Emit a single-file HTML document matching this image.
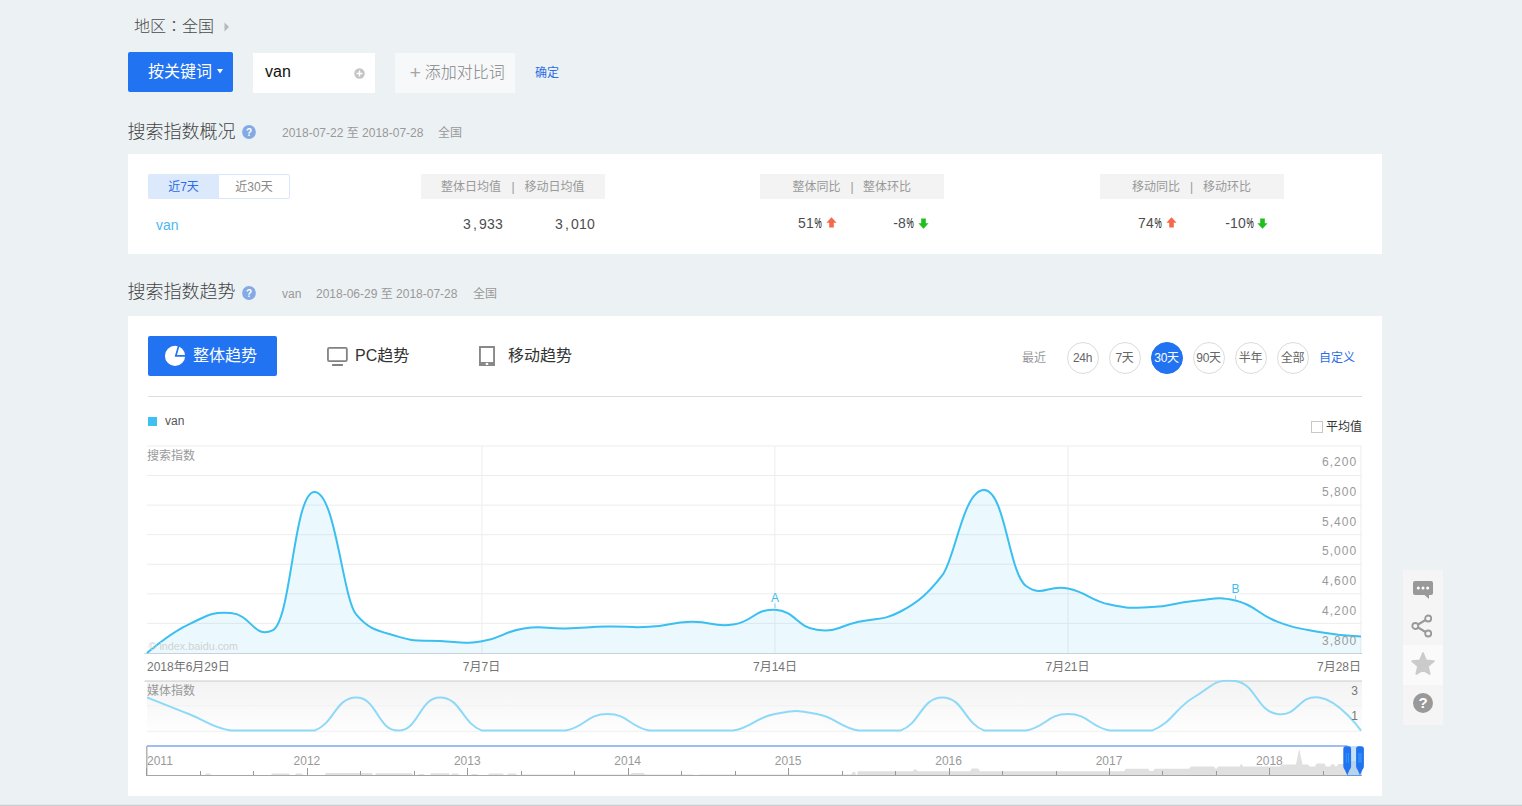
<!DOCTYPE html>
<html lang="zh-CN"><head><meta charset="utf-8"><title>百度指数</title><style>
*{margin:0;padding:0;box-sizing:border-box}
html,body{width:1522px;height:806px;overflow:hidden}
body{background:#ecf1f4;font-family:"Liberation Sans","Noto Sans CJK SC",sans-serif;color:#333;position:relative;font-size:12px}
.abs{position:absolute;white-space:nowrap}
.t16{font-size:16px;line-height:20px}
.lt{font-weight:300}
.jp{font-family:"Noto Sans CJK JP","Noto Sans CJK TC",sans-serif}
.t12{font-size:12px;line-height:16px}
.panel{position:absolute;left:128px;width:1254px;background:#fff}
.blue{background:#2173f1;color:#fff;border-radius:2px}
.hd{position:absolute;top:174px;height:25px;width:184px;background:#f3f3f3;color:#999;font-size:12px;line-height:27px}
.hd span{position:absolute;top:0}
.num{font-size:14px;color:#4e4e4e;line-height:16px}
.num i{display:inline-block;width:8px;text-align:center;font-style:normal}
.num i.n{width:5px}
.num i.p b{display:inline-block;font-weight:normal;transform:scaleX(0.58);transform-origin:50% 50%;margin:0 -3px;color:#000}
.circ{position:absolute;top:342px;width:32px;height:32px;border-radius:16px;border:1px solid #dcdcdc;background:#fff;color:#666;font-size:12px;line-height:30px;text-align:center;letter-spacing:-0.3px;text-indent:-1px}
.circ.on{background:#2173f1;border-color:#2173f1;color:#fff}
svg.chart{position:absolute;left:0;top:0}
svg text{font-family:"Liberation Sans","Noto Sans CJK SC",sans-serif}
.yl{font-size:12px;fill:#999;letter-spacing:1px}
.cl{font-size:12px;fill:#999}
.wm{font-size:10.8px;fill:#d2d2d2}
.mk{font-size:12px;fill:#3bbdee}
.xl{font-size:12px;fill:#747474}
.xl2{font-size:12px;fill:#777}
.yr{font-size:12px;fill:#999}
.tb{position:absolute;left:1403px;width:40px;background:#f5f5f5}
</style></head>
<body>
<div class="abs t16 lt" style="left:134px;top:17px;color:#4a4a4a">地区<span lang="ja" class="jp" style="display:inline-block;width:16px;height:10px;line-height:10px;overflow:visible;vertical-align:baseline">：</span>全国</div>
<svg class="abs" style="left:223.7px;top:21.8px" width="6" height="10" viewBox="0 0 6 10"><path d="M0.5,0.5 L5,5 L0.5,9.5 Z" fill="#b5b9bd"/></svg>
<div class="abs blue" style="left:128px;top:52px;width:105px;height:40px"></div>
<div class="abs t16" style="left:148px;top:62px;color:#fff">按关键词</div>
<svg class="abs" style="left:217px;top:69px" width="6" height="5" viewBox="0 0 6 5"><path d="M0,0 H6 L3,4.5 Z" fill="#fff"/></svg>
<div class="abs" style="left:253px;top:53px;width:122px;height:40px;background:#fff"></div>
<div class="abs t16" style="left:265px;top:62px;color:#111">van</div>
<svg class="abs" style="left:354px;top:68px" width="11" height="11" viewBox="0 0 11 11"><circle cx="5.5" cy="5.5" r="5.2" fill="#c4c4c4"/><path d="M2.5,5.5 H8.5 M5.5,2.5 V8.5" stroke="#fff" stroke-width="1.4"/></svg>
<div class="abs" style="left:395px;top:53px;width:120px;height:40px;background:#f6f8fa"></div>
<div class="abs t16 lt" style="left:410.2px;top:62px;color:#858585"><span style="font-size:19px;color:#a5a5a5;position:relative;top:0.5px;left:-0.5px">+</span><span style="margin-left:3.5px">添加对比词</span></div>
<div class="abs t12" style="left:535px;top:65px;color:#2b6de6">确定</div>
<div class="abs" style="left:127.5px;top:120px;font-size:18px;line-height:24px;color:#444;font-weight:300">搜索指数概况</div>
<svg class="abs" style="left:241.8px;top:124.5px" width="14" height="14" viewBox="0 0 14 14"><circle cx="7" cy="7" r="6.9" fill="#84aae6"/><text x="7" y="10.6" text-anchor="middle" font-size="10" font-weight="bold" fill="#fff">?</text></svg>
<div class="abs t12" style="left:282px;top:125px;color:#999">2018-07-22 至 2018-07-28</div>
<div class="abs t12" style="left:438px;top:125px;color:#999">全国</div>
<div class="panel" style="top:154px;height:100px"></div>
<div class="abs" style="left:148px;top:174px;width:142px;height:25px;border:1px solid #dbe6fb;border-radius:2px;background:#fff"></div>
<div class="abs" style="left:148px;top:174px;width:71px;height:25px;background:#dce8fc;border-radius:2px 0 0 2px;color:#2b6de6;text-align:center;line-height:27px;font-size:12px">近7天</div>
<div class="abs" style="left:219px;top:174px;width:70px;height:25px;color:#888;text-align:center;line-height:27px;font-size:12px">近30天</div>
<div class="hd" style="left:421px"><span style="left:20px">整体日均值</span><span style="left:90.5px">|</span><span style="left:103.5px">移动日均值</span></div>
<div class="hd" style="left:760px"><span style="left:32.5px">整体同比</span><span style="left:90.5px">|</span><span style="left:103px">整体环比</span></div>
<div class="hd" style="left:1100px"><span style="left:32px">移动同比</span><span style="left:90px">|</span><span style="left:103px">移动环比</span></div>
<div class="abs" style="left:156px;top:216px;font-size:14px;line-height:18px;color:#4bb9ee">van</div>
<div class="abs num" style="left:463px;top:215.5px"><i>3</i><i>,</i><i>9</i><i>3</i><i>3</i></div>
<div class="abs num" style="left:555px;top:215.5px"><i>3</i><i>,</i><i>0</i><i>1</i><i>0</i></div>
<div class="abs num" style="left:798px;top:215px"><i>5</i><i>1</i><i class="p"><b>%</b></i></div>
<svg class="abs" style="left:826.3px;top:216.9px" width="11" height="11" viewBox="0 0 11 11"><path d="M5.5,0.3 L10.6,5.8 H7.8 V10.5 H3.2 V5.8 H0.4 Z" fill="#f4694c"/></svg>
<div class="abs num" style="left:893px;top:215px"><i class="n">-</i><i>8</i><i class="p"><b>%</b></i></div>
<svg class="abs" style="left:918.3px;top:218px" width="11" height="11" viewBox="0 0 11 11"><path d="M5.5,10.7 L10.6,5.2 H7.8 V0.5 H3.2 V5.2 H0.4 Z" fill="#1fbf1f"/></svg>
<div class="abs num" style="left:1138px;top:215px"><i>7</i><i>4</i><i class="p"><b>%</b></i></div>
<svg class="abs" style="left:1166.3px;top:216.9px" width="11" height="11" viewBox="0 0 11 11"><path d="M5.5,0.3 L10.6,5.8 H7.8 V10.5 H3.2 V5.8 H0.4 Z" fill="#f4694c"/></svg>
<div class="abs num" style="left:1225px;top:215px"><i class="n">-</i><i>1</i><i>0</i><i class="p"><b>%</b></i></div>
<svg class="abs" style="left:1257.3px;top:218px" width="11" height="11" viewBox="0 0 11 11"><path d="M5.5,10.7 L10.6,5.2 H7.8 V0.5 H3.2 V5.2 H0.4 Z" fill="#1fbf1f"/></svg>
<div class="abs" style="left:127.5px;top:280px;font-size:18px;line-height:24px;color:#444;font-weight:300">搜索指数趋势</div>
<svg class="abs" style="left:241.8px;top:286px" width="14" height="14" viewBox="0 0 14 14"><circle cx="7" cy="7" r="6.9" fill="#84aae6"/><text x="7" y="10.6" text-anchor="middle" font-size="10" font-weight="bold" fill="#fff">?</text></svg>
<div class="abs t12" style="left:282px;top:286px;color:#999">van</div>
<div class="abs t12" style="left:316px;top:286px;color:#999">2018-06-29 至 2018-07-28</div>
<div class="abs t12" style="left:473px;top:286px;color:#999">全国</div>
<div class="panel" style="top:316px;height:480px"></div>
<div class="abs blue" style="left:148px;top:336px;width:129px;height:40px"></div>
<svg class="abs" style="left:164px;top:345px" width="22" height="22" viewBox="0 0 22 22"><circle cx="11.04" cy="10.9" r="10.1" fill="#fff"/><path d="M14.9,0.1 L11.8,10.95 H23" fill="none" stroke="#2173f1" stroke-width="1.7" stroke-linejoin="miter"/></svg>
<div class="abs t16" style="left:193px;top:346px;color:#fff">整体趋势</div>
<svg class="abs" style="left:326px;top:346px" width="24" height="22" viewBox="0 0 24 22"><rect x="1.95" y="1.95" width="18.9" height="13.1" rx="1.4" fill="none" stroke="#828282" stroke-width="1.8"/><rect x="6.1" y="18" width="10.8" height="2" fill="#828282"/></svg>
<div class="abs t16" style="left:355px;top:346px;color:#333">PC趋势</div>
<svg class="abs" style="left:478px;top:345px" width="18" height="22" viewBox="0 0 18 22"><path d="M1.5,1 H16.5 a0.5,0.5 0 0 1 0.5,0.5 V20.5 a0.5,0.5 0 0 1 -0.5,0.5 H1.5 a0.5,0.5 0 0 1 -0.5,-0.5 V1.5 a0.5,0.5 0 0 1 0.5,-0.5 Z M2.9,2.9 V17 H15.1 V2.9 Z" fill="#888" fill-rule="evenodd"/><ellipse cx="9" cy="18.9" rx="1.4" ry="1.2" fill="#fff"/></svg>
<div class="abs t16" style="left:508px;top:346px;color:#333">移动趋势</div>
<div class="abs t12" style="left:1022px;top:350px;color:#999">最近</div>
<div class="circ" style="left:1067px">24h</div>
<div class="circ" style="left:1109px">7天</div>
<div class="circ on" style="left:1151px">30天</div>
<div class="circ" style="left:1193px">90天</div>
<div class="circ" style="left:1235px">半年</div>
<div class="circ" style="left:1277px">全部</div>
<div class="abs t12" style="left:1319px;top:350px;color:#2b6de6">自定义</div>
<div class="abs" style="left:148px;top:396px;width:1214px;height:1px;background:#dddddd"></div>
<div class="abs" style="left:147.5px;top:416.6px;width:9px;height:9px;background:#3cc1f1"></div>
<div class="abs t12" style="left:165px;top:413px;color:#555">van</div>
<div class="abs" style="left:1311px;top:421px;width:12px;height:12px;border:1px solid #c8c8c8;background:#fff"></div>
<div class="abs t12" style="left:1326px;top:418.500px;color:#333">平均值</div>
<svg class="chart" width="1522" height="806" viewBox="0 0 1522 806">
<defs><linearGradient id="mg" x1="0" y1="0" x2="0" y2="1"><stop offset="0" stop-color="#f3f3f3"/><stop offset="1" stop-color="#fefefe"/></linearGradient><clipPath id="mc"><rect x="147" y="679.8" width="1215" height="60"/></clipPath></defs>
<line x1="147" y1="446.00" x2="1361.5" y2="446.00" stroke="#ededed" stroke-width="1"/>
<line x1="147" y1="475.56" x2="1361.5" y2="475.56" stroke="#ededed" stroke-width="1"/>
<line x1="147" y1="505.12" x2="1361.5" y2="505.12" stroke="#ededed" stroke-width="1"/>
<line x1="147" y1="534.68" x2="1361.5" y2="534.68" stroke="#ededed" stroke-width="1"/>
<line x1="147" y1="564.24" x2="1361.5" y2="564.24" stroke="#ededed" stroke-width="1"/>
<line x1="147" y1="593.80" x2="1361.5" y2="593.80" stroke="#ededed" stroke-width="1"/>
<line x1="147" y1="623.36" x2="1361.5" y2="623.36" stroke="#ededed" stroke-width="1"/>
<line x1="481.9" y1="446" x2="481.9" y2="653" stroke="#ededed" stroke-width="1"/>
<line x1="774.9" y1="446" x2="774.9" y2="653" stroke="#ededed" stroke-width="1"/>
<line x1="1068.0" y1="446" x2="1068.0" y2="653" stroke="#ededed" stroke-width="1"/>
<line x1="1361.0" y1="446" x2="1361.0" y2="653" stroke="#ededed" stroke-width="1"/>
<path d="M147.00,653.00 C147.00,653.00 169.85,633.05 188.86,624.30 C207.88,615.55 209.84,611.76 230.72,613.10 C251.61,614.44 253.68,639.28 272.59,630.30 C291.49,621.32 293.52,492.26 314.45,491.90 C335.38,491.54 342.69,598.81 356.31,614.70 C369.93,630.59 378.14,630.55 398.17,636.60 C418.21,642.65 419.13,639.85 440.03,641.00 C460.93,642.15 461.19,644.24 481.90,641.20 C502.60,638.16 503.06,631.49 523.76,628.40 C544.46,625.31 544.70,628.87 565.62,628.40 C586.55,627.93 586.56,626.90 607.48,626.50 C628.41,626.10 628.45,627.97 649.34,626.80 C670.24,625.63 670.28,622.35 691.21,621.80 C712.13,621.25 712.33,627.45 733.07,624.60 C753.81,621.75 754.03,608.69 774.93,609.80 C795.83,610.91 796.03,627.12 816.79,629.80 C837.55,632.48 838.21,626.27 858.66,621.80 C879.10,617.33 881.93,621.12 900.52,611.50 C919.10,601.88 929.60,591.78 942.38,575.20 C955.16,558.62 963.32,489.52 984.24,490.00 C1005.17,490.48 1008.94,574.02 1026.10,586.00 C1043.26,597.98 1047.51,584.07 1067.97,588.50 C1088.42,592.93 1089.37,600.17 1109.83,604.60 C1130.28,609.03 1130.78,607.97 1151.69,607.10 C1172.60,606.23 1172.68,602.74 1193.55,601.10 C1214.42,599.46 1215.02,595.80 1235.41,600.50 C1255.81,605.20 1257.64,614.34 1277.28,621.60 C1296.91,628.86 1298.53,628.22 1319.14,631.90 C1339.74,635.58 1361.00,636.60 1361.00,636.60 L1361.00,653 L147.00,653 Z" fill="#38c0f0" fill-opacity="0.098" stroke="none"/>
<rect x="144.5" y="653" width="1217.5" height="1" fill="#c9d1d9"/>
<path d="M147.00,653.00 C147.00,653.00 169.85,633.05 188.86,624.30 C207.88,615.55 209.84,611.76 230.72,613.10 C251.61,614.44 253.68,639.28 272.59,630.30 C291.49,621.32 293.52,492.26 314.45,491.90 C335.38,491.54 342.69,598.81 356.31,614.70 C369.93,630.59 378.14,630.55 398.17,636.60 C418.21,642.65 419.13,639.85 440.03,641.00 C460.93,642.15 461.19,644.24 481.90,641.20 C502.60,638.16 503.06,631.49 523.76,628.40 C544.46,625.31 544.70,628.87 565.62,628.40 C586.55,627.93 586.56,626.90 607.48,626.50 C628.41,626.10 628.45,627.97 649.34,626.80 C670.24,625.63 670.28,622.35 691.21,621.80 C712.13,621.25 712.33,627.45 733.07,624.60 C753.81,621.75 754.03,608.69 774.93,609.80 C795.83,610.91 796.03,627.12 816.79,629.80 C837.55,632.48 838.21,626.27 858.66,621.80 C879.10,617.33 881.93,621.12 900.52,611.50 C919.10,601.88 929.60,591.78 942.38,575.20 C955.16,558.62 963.32,489.52 984.24,490.00 C1005.17,490.48 1008.94,574.02 1026.10,586.00 C1043.26,597.98 1047.51,584.07 1067.97,588.50 C1088.42,592.93 1089.37,600.17 1109.83,604.60 C1130.28,609.03 1130.78,607.97 1151.69,607.10 C1172.60,606.23 1172.68,602.74 1193.55,601.10 C1214.42,599.46 1215.02,595.80 1235.41,600.50 C1255.81,605.20 1257.64,614.34 1277.28,621.60 C1296.91,628.86 1298.53,628.22 1319.14,631.90 C1339.74,635.58 1361.00,636.60 1361.00,636.60" fill="none" stroke="#3abff0" stroke-width="2" stroke-linejoin="round"/>
<text x="1357.1" y="465.8" text-anchor="end" class="yl">6,200</text>
<text x="1357.1" y="495.7" text-anchor="end" class="yl">5,800</text>
<text x="1357.1" y="525.5" text-anchor="end" class="yl">5,400</text>
<text x="1357.1" y="555.4" text-anchor="end" class="yl">5,000</text>
<text x="1357.1" y="585.3" text-anchor="end" class="yl">4,600</text>
<text x="1357.1" y="615.1" text-anchor="end" class="yl">4,200</text>
<text x="1357.1" y="645.0" text-anchor="end" class="yl">3,800</text>
<text x="147" y="460" class="cl">搜索指数</text>
<text x="148.5" y="650" class="wm">© index.baidu.com</text>
<text x="775" y="601.5" text-anchor="middle" class="mk">A</text><rect x="774.5" y="603.5" width="1" height="4.5" fill="#7fd2f3"/>
<text x="1235.5" y="592.5" text-anchor="middle" class="mk">B</text><rect x="1235" y="595.5" width="1" height="4.5" fill="#7fd2f3"/>
<text x="147" y="670.5" class="xl">2018年6月29日</text>
<text x="481.5" y="670.5" text-anchor="middle" class="xl">7月7日</text>
<text x="775" y="670.5" text-anchor="middle" class="xl">7月14日</text>
<text x="1067.5" y="670.5" text-anchor="middle" class="xl">7月21日</text>
<text x="1361" y="670.5" text-anchor="end" class="xl">7月28日</text>
<rect x="147" y="681" width="1215" height="52" fill="url(#mg)"/>
<rect x="144.5" y="680.3" width="1217.5" height="1.6" fill="#dcdcdc"/>
<rect x="147" y="705.3" width="1215" height="1" fill="#f1f1f1"/>
<rect x="147" y="730.8" width="1215" height="1" fill="#f1f1f1"/>
<g clip-path="url(#mc)"><path d="M147.00,697.50 C147.00,697.50 169.40,706.35 188.86,714.05 C208.33,721.75 210.16,726.68 230.72,730.60 C251.29,730.60 251.66,730.60 272.59,730.60 C293.52,730.60 294.68,730.60 314.45,730.60 C334.22,723.73 335.38,697.50 356.31,697.50 C377.24,697.50 377.24,730.60 398.17,730.60 C419.10,730.60 419.10,697.50 440.03,697.50 C460.97,697.50 462.13,723.73 481.90,730.60 C501.67,730.60 502.83,730.60 523.76,730.60 C544.69,730.60 545.06,730.60 565.62,730.60 C586.18,726.68 586.55,714.05 607.48,714.05 C628.41,714.05 628.78,726.68 649.34,730.60 C669.91,730.60 670.28,730.60 691.21,730.60 C712.14,730.60 712.51,730.60 733.07,730.60 C753.63,726.68 754.37,717.97 774.93,714.05 C795.49,710.13 796.23,710.13 816.79,714.05 C837.35,717.97 838.09,726.68 858.66,730.60 C879.22,730.60 880.75,730.60 900.52,730.60 C920.29,723.73 921.45,697.50 942.38,697.50 C963.31,697.50 964.47,723.73 984.24,730.60 C1004.01,730.60 1005.54,730.60 1026.10,730.60 C1046.66,726.68 1047.03,714.05 1067.97,714.05 C1088.90,714.05 1089.27,726.68 1109.83,730.60 C1130.39,730.60 1131.92,730.60 1151.69,730.60 C1171.46,723.73 1175.42,707.95 1193.55,697.50 C1211.69,687.05 1214.71,677.90 1235.41,680.95 C1256.12,684.00 1256.57,711.00 1277.28,714.05 C1297.98,717.10 1298.43,694.45 1319.14,697.50 C1339.85,700.55 1361.00,730.60 1361.00,730.60" fill="none" stroke="#8fd9f8" stroke-width="2"/></g>
<text x="147" y="694.5" class="cl">媒体指数</text>
<text x="1358" y="694.5" text-anchor="end" class="xl2">3</text>
<text x="1358" y="720" text-anchor="end" class="xl2">1</text>
<path d="M147.0,775.5 L148.2,775.5 L204.8,775.5 L206.0,773.6 L210.0,773.6 L211.2,775.5 L270.8,775.5 L272.0,773.5 L289.0,773.5 L290.2,775.5 L294.8,775.5 L296.0,773.6 L302.0,773.6 L303.2,775.5 L324.8,775.5 L326.0,773.0 L372.0,773.0 L373.2,775.5 L374.8,775.5 L376.0,773.3 L412.0,773.3 L413.2,775.5 L417.8,775.5 L419.0,774.0 L424.0,774.0 L425.2,775.5 L429.8,775.5 L431.0,773.3 L449.0,773.3 L450.2,775.5 L450.8,775.5 L452.0,773.6 L458.0,773.6 L459.2,775.5 L470.8,775.5 L472.0,774.0 L477.0,774.0 L478.2,775.5 L487.8,775.5 L489.0,773.5 L503.0,773.5 L504.2,775.5 L506.8,775.5 L508.0,773.6 L516.0,773.6 L517.2,775.5 L520.8,775.5 L522.0,774.4 L630.0,774.4 L632.0,773.0 L644.0,773.0 L645.0,774.4 L693.0,774.4 L694.2,775.5 L697.8,775.5 L699.0,774.4 L851.0,774.4 L853.0,772.0 L855.0,772.0 L856.2,775.5 L856.8,775.5 L858.0,771.2 L913.0,771.2 L914.5,769.3 L915.5,769.3 L918.0,771.2 L970.0,771.2 L972.0,768.4 L978.0,768.4 L980.0,771.2 L1124.0,771.2 L1126.0,768.7 L1148.0,768.7 L1150.0,771.0 L1153.0,771.0 L1155.0,768.7 L1189.0,768.7 L1191.0,766.5 L1214.0,766.5 L1215.6,768.7 L1216.6,768.7 L1218.0,766.5 L1239.5,766.5 L1241.0,764.0 L1241.6,764.0 L1243.0,766.5 L1280.0,766.5 L1282.0,764.5 L1296.0,764.5 L1299.0,749.7 L1299.4,749.7 L1302.5,764.5 L1308.0,764.5 L1309.5,766.5 L1315.0,766.5 L1316.5,763.5 L1324.5,763.5 L1326.0,766.5 L1330.0,766.5 L1331.5,764.3 L1334.0,764.3 L1335.5,766.5 L1336.5,766.5 L1338.4,764.0 L1362.0,764.0 L1362.0,775.5 Z" fill="#e0e0e0"/>
<rect x="1347" y="746" width="13" height="29" fill="#c8e0f5"/><rect x="1347" y="761" width="13" height="14" fill="#b9d4ea"/>
<rect x="147" y="745.2" width="1200.5" height="1.6" fill="#86aeea"/>
<rect x="146" y="746" width="1.5" height="30" fill="#b4b4b4"/>
<rect x="146" y="775" width="1216" height="1" fill="#a6a6a6"/>
<rect x="146.0" y="768" width="1" height="7" fill="#999999"/>
<text x="147" y="765" class="yr">2011</text>
<rect x="200.0" y="771" width="1" height="4" fill="#999999"/>
<rect x="253.0" y="771" width="1" height="4" fill="#999999"/>
<rect x="307.0" y="768" width="1" height="7" fill="#999999"/>
<text x="306.9" y="765" text-anchor="middle" class="yr">2012</text>
<rect x="360.0" y="771" width="1" height="4" fill="#999999"/>
<rect x="414.0" y="771" width="1" height="4" fill="#999999"/>
<rect x="467.0" y="768" width="1" height="7" fill="#999999"/>
<text x="467.3" y="765" text-anchor="middle" class="yr">2013</text>
<rect x="521.0" y="771" width="1" height="4" fill="#999999"/>
<rect x="574.0" y="771" width="1" height="4" fill="#999999"/>
<rect x="628.0" y="768" width="1" height="7" fill="#999999"/>
<text x="627.7" y="765" text-anchor="middle" class="yr">2014</text>
<rect x="681.0" y="771" width="1" height="4" fill="#999999"/>
<rect x="735.0" y="771" width="1" height="4" fill="#999999"/>
<rect x="788.0" y="768" width="1" height="7" fill="#999999"/>
<text x="788.2" y="765" text-anchor="middle" class="yr">2015</text>
<rect x="842.0" y="771" width="1" height="4" fill="#999999"/>
<rect x="895.0" y="771" width="1" height="4" fill="#999999"/>
<rect x="949.0" y="768" width="1" height="7" fill="#999999"/>
<text x="948.6" y="765" text-anchor="middle" class="yr">2016</text>
<rect x="1002.0" y="771" width="1" height="4" fill="#999999"/>
<rect x="1056.0" y="771" width="1" height="4" fill="#999999"/>
<rect x="1109.0" y="768" width="1" height="7" fill="#999999"/>
<text x="1109.0" y="765" text-anchor="middle" class="yr">2017</text>
<rect x="1162.0" y="771" width="1" height="4" fill="#999999"/>
<rect x="1216.0" y="771" width="1" height="4" fill="#999999"/>
<rect x="1269.0" y="768" width="1" height="7" fill="#999999"/>
<text x="1269.4" y="765" text-anchor="middle" class="yr">2018</text>
<rect x="1323.0" y="771" width="1" height="4" fill="#999999"/>
<rect x="1347" y="775" width="14" height="1" fill="#5b9be8"/>
<path d="M1343.30,748.8 q0,-2.6 2.6,-2.6 h2.6 q2.6,0 2.6,2.6 v17.4 q0,2.6 -1.6,3.8 l-2.3,5.2 l-2.3,-5.2 q-1.6,-1.2 -1.6,-3.8 Z" fill="#2173f1"/><rect x="1345.90" y="753" width="1" height="9.7" fill="#2a9bf5"/><rect x="1348.00" y="753" width="1" height="9.7" fill="#2a9bf5"/>
<path d="M1356.10,748.8 q0,-2.6 2.6,-2.6 h2.6 q2.6,0 2.6,2.6 v17.4 q0,2.6 -1.6,3.8 l-2.3,5.2 l-2.3,-5.2 q-1.6,-1.2 -1.6,-3.8 Z" fill="#2173f1"/><rect x="1358.20" y="753" width="3.6" height="9.7" fill="#2d8df3"/>
</svg>
<div class="tb" style="top:570px;height:155px"></div>
<div class="tb" style="top:645px;height:40px;background:#fafafa"></div>
<svg class="abs" style="left:1412px;top:579px" width="22" height="22" viewBox="0 0 22 22"><path d="M3,2 H19 a2,2 0 0 1 2,2 V14 a2,2 0 0 1 -2,2 H17 V20 L12.5,16 H3 a2,2 0 0 1 -2,-2 V4 a2,2 0 0 1 2,-2 Z" fill="#999"/><circle cx="6.3" cy="9" r="1.5" fill="#fff"/><circle cx="11" cy="9" r="1.5" fill="#fff"/><circle cx="15.7" cy="9" r="1.5" fill="#fff"/></svg>
<svg class="abs" style="left:1410px;top:613px" width="24" height="26" viewBox="0 0 24 26"><path d="M18,5.5 L5.5,13 L18,20.5" fill="none" stroke="#999" stroke-width="2.1"/><circle cx="18.2" cy="5.5" r="3" fill="#f5f5f5" stroke="#999" stroke-width="1.8"/><circle cx="5.3" cy="13" r="3" fill="#f5f5f5" stroke="#999" stroke-width="1.8"/><circle cx="18.2" cy="20.5" r="3" fill="#f5f5f5" stroke="#999" stroke-width="1.8"/></svg>
<svg class="abs" style="left:1410px;top:651px" width="26" height="25" viewBox="0 0 26 25"><path d="M13,2 L16,9.4 L23.9,10.1 L17.9,15.3 L19.7,23 L13,18.9 L6.3,23 L8.1,15.3 L2.1,10.1 L10,9.4 Z" fill="#cbcbcb" stroke="#cbcbcb" stroke-width="1.8" stroke-linejoin="round"/></svg>
<svg class="abs" style="left:1412px;top:692px" width="22" height="22" viewBox="0 0 22 22"><circle cx="11" cy="11" r="10" fill="#999"/><text x="11" y="16.2" text-anchor="middle" font-size="15" font-weight="bold" fill="#fff">?</text></svg>
<div class="abs" style="left:0;top:804px;width:1522px;height:1px;background:#e4e8ea"></div>
<div class="abs" style="left:0;top:805px;width:1522px;height:1px;background:#cccdce"></div>
</body></html>
